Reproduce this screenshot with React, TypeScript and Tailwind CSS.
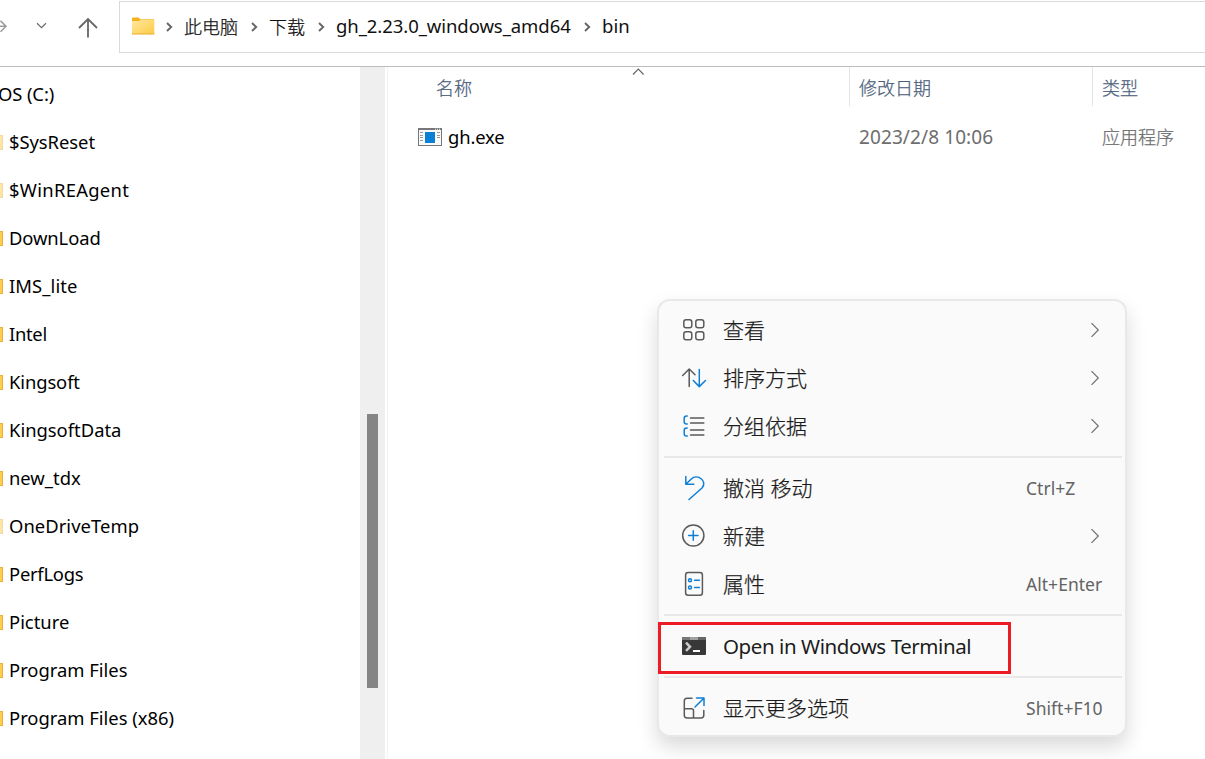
import type { ReactNode } from "react";

const folders = [
  { name: "$SysReset", hidden: true, tracking: "tracking-[-0.05px]" },
  { name: "$WinREAgent", hidden: true, tracking: "tracking-[0.3px]" },
  { name: "DownLoad", tracking: "tracking-[-0.1px]" },
  { name: "IMS_lite", tracking: "tracking-[0.1px]" },
  { name: "Intel", tracking: "tracking-[-0.3px]" },
  { name: "Kingsoft", tracking: "tracking-[-0.1px]" },
  { name: "KingsoftData", tracking: "tracking-normal" },
  { name: "new_tdx", tracking: "tracking-normal" },
  { name: "OneDriveTemp", hidden: true, tracking: "tracking-[0.05px]" },
  { name: "PerfLogs", tracking: "tracking-[-0.25px]" },
  { name: "Picture", tracking: "tracking-normal" },
  { name: "Program Files", tracking: "tracking-normal" },
  { name: "Program Files (x86)", tracking: "tracking-normal" },
];

function Crumb() {
  return (
    <svg width="8" height="10" viewBox="0 0 8 10" fill="none" stroke="#666" strokeWidth="1.9" className="shrink-0">
      <path d="M1 1 5.2 5 1 9" />
    </svg>
  );
}

function Toolbar() {
  return (
    <header className="flex h-[67px] shrink-0 border-b border-[#bcbcbc]">
      <div className="flex h-[52px] w-[119px] shrink-0 items-center">
        <svg width="119" height="52" viewBox="0 0 119 52" fill="none">
          <path d="M0 26.3H6M0.5 20.8 6 26.3 0.5 31.8" stroke="#9d9d9d" strokeWidth="1.6" />
          <path d="M37 23.3 41.5 27.7 46 23.3" stroke="#6b6b6b" strokeWidth="1.2" />
          <path d="M88 37.5V19.5M79 28 88 19 97 28" stroke="#666" strokeWidth="1.8" />
        </svg>
      </div>
      <nav className="mt-px flex h-[52px] flex-1 items-center border-y border-l border-[#d9d9d9] pl-3 text-[18px] whitespace-nowrap text-[#111]">
        <svg width="23" height="18" viewBox="0 0 23 18" className="mb-[3px] shrink-0">
          <defs>
            <linearGradient id="folder" x1="0" y1="0" x2="1" y2="1">
              <stop offset="0" stopColor="#ffe8a0" />
              <stop offset="1" stopColor="#ffcb45" />
            </linearGradient>
          </defs>
          <path d="M0 1.2Q0 .4.8.4H6.6L8.4 2.2H22V6H0Z" fill="#f5b21c" />
          <path d="M0 4H7L9 2.8H22.3V17H0Z" fill="url(#folder)" />
          <path d="M0 17H22.3" stroke="#e8aa28" />
        </svg>
        <span className="ml-[11px] flex"><Crumb /></span>
        <span className="ml-[10px] w-[54px] pb-px font-light [-webkit-text-stroke:0.25px]">此电脑</span>
        <span className="ml-[13px] flex"><Crumb /></span>
        <span className="ml-[10px] w-[36px] pb-px font-light [-webkit-text-stroke:0.25px]">下载</span>
        <span className="ml-[13px] flex"><Crumb /></span>
        <span className="ml-[10px] w-[236px] pb-[2px] text-[18.5px] tracking-[-0.07px]">gh_2.23.0_windows_amd64</span>
        <span className="ml-[12px] flex"><Crumb /></span>
        <span className="ml-[10px] pb-[2px] text-[18.5px]">bin</span>
      </nav>
    </header>
  );
}

function Sidebar() {
  return (
    <aside className="flex w-[388px] shrink-0 border-r border-[#f3f3f3]">
      <div className="w-[360px] pt-[3px] text-[18.4px] text-black">
        <div className="-ml-[2px] flex h-12 items-center tracking-[-0.1px]">OS (C:)</div>
        {folders.map((f) => (
          <div key={f.name} className="flex h-12 items-center gap-[6px] whitespace-nowrap">
            <span
              className={
                f.hidden
                  ? "h-[15px] w-[3px] border-y border-r border-[#f3dba0] bg-[#ffe6a6]"
                  : "h-[15px] w-[3px] border-y border-r border-[#e9b23c] bg-[#ffcd4d]"
              }
            />
            <span className={f.tracking}>{f.name}</span>
          </div>
        ))}
      </div>
      <div className="w-[25px] bg-[#efefef] pt-[347px]">
        <div className="ml-[7px] h-[274px] w-[11px] bg-[#858585]" />
      </div>
    </aside>
  );
}

function FileList() {
  return (
    <main className="flex-1 text-[18px] whitespace-nowrap">
      <div className="flex h-[39px] items-center font-light text-[#4c607a] [-webkit-text-stroke:0.25px]">
        <div className="flex h-full w-[461px] pl-12">
          <span className="w-[196px] self-center pt-[2px]">名称</span>
          <svg width="13" height="8" viewBox="0 0 13 8" fill="none" stroke="#666" strokeWidth="1.2" className="mt-px">
            <path d="M1 6.5 6.3 1.2 11.6 6.5" />
          </svg>
        </div>
        <div className="flex h-full w-[243px] items-center border-l border-[#e5e5e5] pt-[2px] pl-[9px]">修改日期</div>
        <div className="flex h-full flex-1 items-center border-l border-[#e5e5e5] pt-[2px] pl-[9px]">类型</div>
      </div>
      <div className="mt-[7px] flex h-12 items-center text-[#6d6d6d]">
        <div className="flex w-[461px] items-center gap-[6px] pl-[30px] text-black">
          <svg width="24" height="18" viewBox="0 0 24 18" className="shrink-0">
            <rect x=".5" y=".5" width="23" height="17" fill="#fafafa" stroke="#777" />
            <path d="M0 1H24" stroke="#777" strokeWidth="2" />
            <path d="M17 1.2H18M19 1.2H20M21 1.2H22" stroke="#fff" />
            <path d="M2 4.5H5M2 7.5H5M2 9.5H5M2 12.5H5M19 4.5H22M19 7.5H22M19 9.5H22" stroke="#999" />
            <rect x="7" y="4" width="10" height="11" fill="#0b7fd3" />
          </svg>
          <span className="text-[18.4px] tracking-[-0.15px]">gh.exe</span>
        </div>
        <div className="w-[243px] pl-[10px] text-[19px] tracking-[0.1px]">2023/2/8 10:06</div>
        <div className="pl-[10px] font-light [-webkit-text-stroke:0.25px]">应用程序</div>
      </div>
    </main>
  );
}

function Icon({ children }: { children: ReactNode }) {
  return (
    <svg width="26" height="26" viewBox="0 0 26 26" fill="none" stroke="#5a5a5a" strokeWidth="1.5" strokeLinecap="round" strokeLinejoin="round" className="mr-4 shrink-0">
      {children}
    </svg>
  );
}

const blue = "#0f7fd6";

const icons = {
  view: (
    <Icon>
      <rect x="2.8" y="2.8" width="8" height="8" rx="2.3" />
      <rect x="14.8" y="2.8" width="8" height="8" rx="2.3" />
      <rect x="2.8" y="14.8" width="8" height="8" rx="2.3" />
      <rect x="14.8" y="14.8" width="8" height="8" rx="2.3" />
    </Icon>
  ),
  sort: (
    <Icon>
      <path d="M8.2 21.5V4.2M1.7 10.5 8.2 4 14 9.8" />
      <path d="M18.3 4.5V21.5M12.3 15.5 18.3 21.6 24.5 15.5" stroke={blue} />
    </Icon>
  ),
  group: (
    <Icon>
      <path d="M9.5 5H22.8M9.5 10H22.8M9.5 17H22.8M9.5 22H22.8" />
      <path d="M6.2 3H5.5Q3.2 3 3.2 5.3V8.7Q3.2 11 5.5 11H6.2M6.2 15H5.5Q3.2 15 3.2 17.3V20.7Q3.2 23 5.5 23H6.2" stroke={blue} />
    </Icon>
  ),
  undo: (
    <Icon>
      <path d="M4.8 1.5V9.3H12.8M4.8 9.3 10 4.2C16.5-1.8 27 6 21 13L8 24.5" stroke={blue} />
    </Icon>
  ),
  add: (
    <Icon>
      <circle cx="12.3" cy="12.5" r="10.6" />
      <path d="M12.3 7.8V17.2M7.6 12.5H17" stroke={blue} />
    </Icon>
  ),
  properties: (
    <Icon>
      <rect x="4.6" y="1.6" width="16.8" height="22.6" rx="2.5" />
      <g stroke={blue}>
        <circle cx="9" cy="9.3" r="1.5" />
        <circle cx="9" cy="16.6" r="1.5" />
        <path d="M13.6 9.3H18.4M13.6 16.6H18.4" />
      </g>
    </Icon>
  ),
  terminal: (
    <Icon>
      <g stroke="none">
        <path d="M1 5.2Q1 4 2.2 4H23.8Q25 4 25 5.2V21Q25 22 24 22H2Q1 22 1 21Z" fill="#383838" />
        <path d="M1 7V5.2Q1 4 2.2 4H9V7Z" fill="#777" />
        <path d="M9 4H17V7H9Z" fill="#a0a0a0" />
        <path d="M17 4H23.8Q25 4 25 5.2V7H17Z" fill="#666" />
      </g>
      <path d="M5 9.7 9 13.8 5 17.9" stroke="#ccc" strokeWidth="2.5" strokeLinecap="butt" strokeLinejoin="miter" />
      <path d="M12 18H19" stroke="#fff" strokeWidth="2" strokeLinecap="butt" />
    </Icon>
  ),
  more: (
    <Icon>
      <path d="M11 3.2H6Q3.3 3.2 3.3 6V20.3Q3.3 23 6 23H20Q22.8 23 22.8 20.3V15.5M3.3 13.7H10.5Q12.5 13.7 12.5 15.7V23" />
      <path d="M15.5 3H23V10.5M22.8 3.2 14 12" stroke={blue} />
    </Icon>
  ),
};

type ItemProps = { icon: ReactNode; label: string; shortcut?: string; submenu?: boolean; latin?: boolean };

function MenuItem({ icon, label, shortcut, submenu, latin }: ItemProps) {
  return (
    <div className="flex h-12 items-center pr-[15px] pl-[22px]">
      {icon}
      <span className={latin ? "flex-1 text-[20.5px] tracking-[-0.42px]" : "flex-1 font-light [-webkit-text-stroke:0.25px]"}>{label}</span>
      {submenu && (
        <svg width="10" height="16" viewBox="0 0 10 16" fill="none" stroke="#707070" strokeWidth="1.2" className="mr-[10px]">
          <path d="M1.5 1.2 8.3 8 1.5 14.8" />
        </svg>
      )}
      {shortcut && <span className="w-[84px] pt-[2px] text-[17.5px] tracking-[0.03px] text-[#636363]">{shortcut}</span>}
    </div>
  );
}

function Separator() {
  return <div className="my-[6px] mr-[3px] ml-[5px] h-[2px] bg-[#e8e8e8]" />;
}

function ContextMenu() {
  return (
    <div className="absolute top-[299px] left-[657px] h-[438px] w-[470px] rounded-[13px] border-2 border-[#e8e8e8] bg-[#fafafa] pt-[5px] text-[21px] whitespace-nowrap text-[#1c1c1c] shadow-[0_10px_20px_rgba(0,0,0,0.15)]">
      <MenuItem icon={icons.view} label="查看" submenu />
      <MenuItem icon={icons.sort} label="排序方式" submenu />
      <MenuItem icon={icons.group} label="分组依据" submenu />
      <Separator />
      <MenuItem icon={icons.undo} label="撤消 移动" shortcut="Ctrl+Z" />
      <MenuItem icon={icons.add} label="新建" submenu />
      <MenuItem icon={icons.properties} label="属性" shortcut="Alt+Enter" />
      <Separator />
      <MenuItem icon={icons.terminal} label="Open in Windows Terminal" latin />
      <Separator />
      <MenuItem icon={icons.more} label="显示更多选项" shortcut="Shift+F10" />
      <div className="absolute top-[321px] -left-px h-[52px] w-[353px] border-[3px] border-[#ed1c24]" />
    </div>
  );
}

export default function App() {
  return (
    <div className="relative flex h-[759px] w-[1205px] flex-col overflow-hidden bg-white font-['Noto_Sans','Noto_Sans_CJK_SC',sans-serif] leading-none">
      <Toolbar />
      <div className="flex min-h-0 flex-1">
        <Sidebar />
        <FileList />
      </div>
      <ContextMenu />
    </div>
  );
}
